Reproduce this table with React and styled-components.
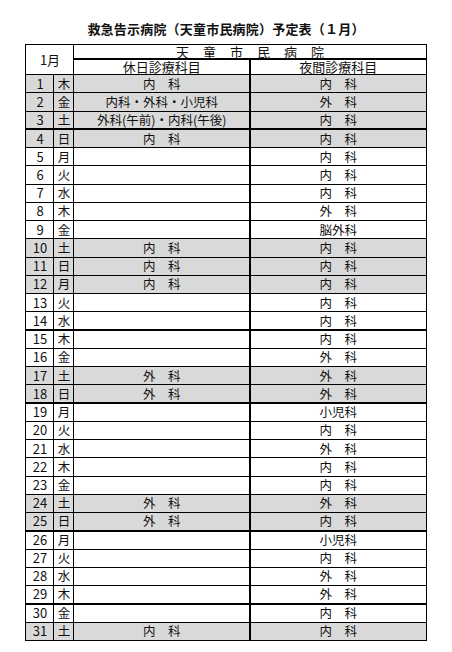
import React from "react";
import styled, { createGlobalStyle } from "styled-components";

const GlobalStyle = createGlobalStyle`
  html, body {
    margin: 0;
    padding: 0;
    background: #fff;
  }
  body {
    font-family: "Noto Sans CJK JP", "Noto Sans", sans-serif;
    color: #111;
  }
`;

const Page = styled.div`
  width: 452px;
  height: 652px;
  padding-top: 21px;
  box-sizing: border-box;
`;

const Title = styled.h1`
  margin: 0 0 7px;
  text-align: center;
  font-size: 13px;
  line-height: 16px;
  font-weight: 700;
  letter-spacing: 0.2px;
`;

const Table = styled.table`
  width: 400px;
  margin: 0 auto;
  border-collapse: collapse;
  table-layout: fixed;
  font-size: 12.5px;
  line-height: 1;
`;

const HeadCell = styled.th`
  font-weight: 400;
  border: 1px solid #000;
  border-bottom-width: ${(p) => (p.$thickBottom ? "2px" : "1px")};
  border-right-width: ${(p) => (p.$thickRight ? "2px" : "1px")};
  text-align: center;
  padding: 0;
  font-size: 13px;
  letter-spacing: ${(p) => p.$spacing || "0"};
  text-indent: ${(p) => p.$spacing || "0"};
  height: ${(p) => p.$h || "14px"};
  line-height: 12px;
  white-space: nowrap;
`;

const Row = styled.tr`
  height: 18.26px;
  background: ${(p) => (p.$gray ? "#d9d9d9" : "#fff")};
`;

const Cell = styled.td`
  border: 1px solid #000;
  border-top-width: ${(p) => (p.$thickTop ? "2px" : "1px")};
  border-right-width: ${(p) => (p.$thickRight ? "2px" : "1px")};
  text-align: center;
  padding: 0;
  white-space: nowrap;
  font-size: ${(p) => (p.$num ? "13px" : "12.5px")};
  line-height: 14px;
`;

const days = [
  [1, "木", "内　科", "内　科"],
  [2, "金", "内科・外科・小児科", "外　科"],
  [3, "土", "外科(午前)・内科(午後)", "内　科"],
  [4, "日", "内　科", "内　科"],
  [5, "月", "", "内　科"],
  [6, "火", "", "内　科"],
  [7, "水", "", "内　科"],
  [8, "木", "", "外　科"],
  [9, "金", "", "脳外科"],
  [10, "土", "内　科", "内　科"],
  [11, "日", "内　科", "内　科"],
  [12, "月", "内　科", "内　科"],
  [13, "火", "", "内　科"],
  [14, "水", "", "内　科"],
  [15, "木", "", "内　科"],
  [16, "金", "", "外　科"],
  [17, "土", "外　科", "外　科"],
  [18, "日", "外　科", "外　科"],
  [19, "月", "", "小児科"],
  [20, "火", "", "内　科"],
  [21, "水", "", "外　科"],
  [22, "木", "", "内　科"],
  [23, "金", "", "内　科"],
  [24, "土", "外　科", "外　科"],
  [25, "日", "外　科", "内　科"],
  [26, "月", "", "小児科"],
  [27, "火", "", "内　科"],
  [28, "水", "", "外　科"],
  [29, "木", "", "外　科"],
  [30, "金", "", "内　科"],
  [31, "土", "内　科", "内　科"],
];

const grayDays = [1, 2, 3, 4, 10, 11, 12, 17, 18, 24, 25, 31];
const thickBefore = [4, 15, 19, 26, 30];

export default function App() {
  return (
    <>
      <GlobalStyle />
      <Page>
        <Title>救急告示病院（天童市民病院）予定表（１月）</Title>
        <Table>
          <colgroup>
            <col style={{ width: 28 }} />
            <col style={{ width: 20 }} />
            <col style={{ width: 176 }} />
            <col style={{ width: 176 }} />
          </colgroup>
          <thead>
            <tr>
              <HeadCell colSpan={2} rowSpan={2}>
                1月
              </HeadCell>
              <HeadCell colSpan={2} $thickBottom $spacing="14px" $h="13px">
                天童市民病院
              </HeadCell>
            </tr>
            <tr>
              <HeadCell $thickRight $h="14px">休日診療科目</HeadCell>
              <HeadCell $h="14px">夜間診療科目</HeadCell>
            </tr>
          </thead>
          <tbody>
            {days.map(([d, w, holiday, night]) => {
              const thick = thickBefore.includes(d);
              return (
                <Row key={d} $gray={grayDays.includes(d)}>
                  <Cell $num $thickTop={thick}>{d}</Cell>
                  <Cell $thickTop={thick}>{w}</Cell>
                  <Cell $thickTop={thick} $thickRight>{holiday}</Cell>
                  <Cell $thickTop={thick}>{night}</Cell>
                </Row>
              );
            })}
          </tbody>
        </Table>
      </Page>
    </>
  );
}
